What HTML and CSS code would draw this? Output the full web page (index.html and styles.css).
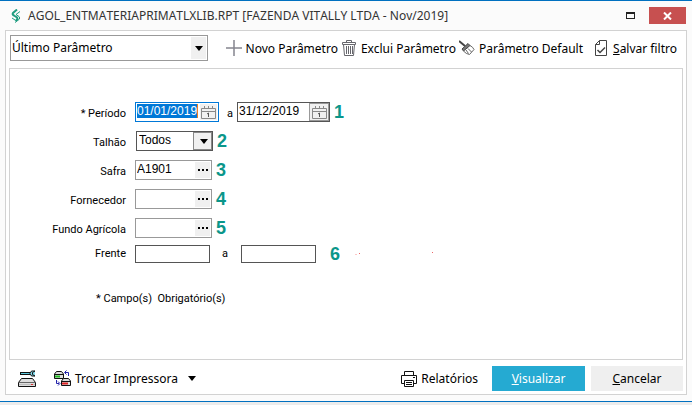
FILE: index.html
```html
<!DOCTYPE html>
<html lang="pt-BR">
<head>
    <meta charset="UTF-8">
    <meta name="viewport" content="width=device-width, initial-scale=1.0">
    <title>AGOL_ENTMATERIAPRIMATLXLIB.RPT</title>
    <link rel="stylesheet" href="styles.css">
</head>
<body>
    <div class="window">
        <div class="titlebar">
            <svg class="logo" width="10" height="14" viewBox="0 0 10 14" fill="none" stroke="#1f9d80" stroke-width="2">
                <path d="M6 0.500L2 4Q1 5.500 3 6.500L6 8.500Q7 10 5.500 11L4.500 12"/>
                <path d="M9 2.500L5 5.500L8 7.500Q9.500 9 8 10.500L4 13.500M1 9L4 11" stroke-width="1"/>
            </svg>
            <span class="title">AGOL_ENTMATERIAPRIMATLXLIB.RPT [FAZENDA VITALLY LTDA - Nov/2019]</span>
            <button type="button" class="max" aria-label="Maximizar"></button>
            <button type="button" class="close" aria-label="Fechar">
                <svg width="9" height="8" viewBox="0 0 9 8" stroke="#fff" stroke-width="2"><path d="M1 0.500L8 7.500M8 0.500L1 7.500"/></svg>
            </button>
        </div>
        <div class="frame">
            <div class="toolbar">
                <div class="combo preset">
                    <select aria-label="Parâmetro">
                        <option>Último Parâmetro</option>
                    </select>
                </div>
                <div class="tools">
                    <button type="button" class="tool">
                        <svg width="16" height="16" viewBox="0 0 16 16" stroke="#85858f" stroke-width="1.500"><path d="M8 0V16M0 8H16"/></svg>
                        Novo Parâmetro
                    </button>
                    <button type="button" class="tool">
                        <svg width="16" height="16" viewBox="0 0 16 16" fill="none" stroke="#66666c"><path d="M1.500 2.500H14.500V4.500H1.500ZM5.500 2.500V0.500H10.500V2.500M2.500 4.500L3.500 15.500H12.500L13.500 4.500M5.500 6V14M7.500 6V14M9.500 6V14M11.500 6V14"/></svg>
                        Exclui Parâmetro
                    </button>
                    <button type="button" class="tool">
                        <svg width="16" height="16" viewBox="0 0 16 16" fill="none" stroke="#444"><path d="M0 1L6 6" stroke-width="2"/><path d="M3 9L9 3.500L11 5.500L4.500 11Z" fill="#777"/><path d="M4.500 11Q7 14 10.500 14.500L15 9.500Q14 7 11 5.500M7 10L9.500 13.500M9 8.500L12.500 12" stroke="#666"/></svg>
                        Parâmetro Default
                    </button>
                    <button type="button" class="tool save">
                        <svg width="16" height="16" viewBox="0 0 16 16" fill="none" stroke="#444"><path d="M6.500 0.500H13.500V15.500H2.500V4.500ZM6.500 0.500V4.500H2.500"/><path d="M4.500 10L7 12.500L12 7.500" stroke-width="1.500"/></svg>
                        <span><u>S</u>alvar filtro</span>
                    </button>
                </div>
            </div>

            <form class="panel">
                <div class="row">
                    <label for="inicio">* Período</label>
                    <div class="field focus">
                        <input type="text" id="inicio" class="date selected" value="01/01/2019">
                        <button type="button" class="pick" aria-label="Calendário">
                            <svg width="15" height="13" viewBox="0 0 15 13" fill="none" stroke="#888"><path d="M0.500 2.500H14.500V12.500H0.500ZM0.500 5.500H14.500M3.500 0V3M7.500 0V3M11.500 0V3"/><path d="M6 8L7.500 7V11" stroke="#555"/></svg>
                        </button>
                    </div>
                    <label for="fim" class="sep">a</label>
                    <div class="field dark until">
                        <input type="text" id="fim" class="date" value="31/12/2019">
                        <button type="button" class="pick boxed" aria-label="Calendário">
                            <svg width="15" height="13" viewBox="0 0 15 13" fill="none" stroke="#888"><path d="M0.500 2.500H14.500V12.500H0.500ZM0.500 5.500H14.500M3.500 0V3M7.500 0V3M11.500 0V3"/><path d="M6 8L7.500 7V11" stroke="#555"/></svg>
                        </button>
                    </div>
                    <span class="num">1</span>
                </div>
                <div class="row">
                    <label for="talhao">Talhão</label>
                    <div class="combo small">
                        <select id="talhao">
                            <option>Todos</option>
                        </select>
                    </div>
                    <span class="num">2</span>
                </div>
                <div class="row">
                    <label for="safra">Safra</label>
                    <div class="field lookup">
                        <input type="text" id="safra" value="A1901">
                        <button type="button" class="dots" aria-label="Procurar safra"><i></i><i></i><i></i></button>
                    </div>
                    <span class="num">3</span>
                </div>
                <div class="row">
                    <label for="fornecedor">Fornecedor</label>
                    <div class="field lookup">
                        <input type="text" id="fornecedor">
                        <button type="button" class="dots" aria-label="Procurar fornecedor"><i></i><i></i><i></i></button>
                    </div>
                    <span class="num">4</span>
                </div>
                <div class="row">
                    <label for="fundo">Fundo Agrícola</label>
                    <div class="field lookup">
                        <input type="text" id="fundo">
                        <button type="button" class="dots" aria-label="Procurar fundo agrícola"><i></i><i></i><i></i></button>
                    </div>
                    <span class="num">5</span>
                </div>
                <div class="row front">
                    <label for="frente1">Frente</label>
                    <input type="text" id="frente1" class="plain">
                    <label for="frente2" class="to">a</label>
                    <input type="text" id="frente2" class="plain">
                    <span class="num">6</span>
                    <svg width="80" height="6" viewBox="0 0 80 6" aria-hidden="true"><path d="M1 3.500H3" stroke="#fbc8c8"/><path d="M5 2.500H6M78 1.500H79" stroke="#e66"/></svg>
                </div>
                <p class="note">* Campo(s)&nbsp; Obrigatório(s)</p>
            </form>

            <div class="footer">
                <button type="button" class="tool" aria-label="Configurar impressora">
                    <svg width="18" height="18" viewBox="0 0 18 18" fill="none" stroke="#111"><path d="M2 3.500H12" stroke-width="3"/><path d="M3 3.500H12" stroke="#5cc8dc"/><path d="M17 1H13.500L12 3.500L13.500 6H17M17 1L14.500 2.500V4.500L17 6" fill="#8de"/><path d="M3.500 8.500H14.500L17.500 12.500V16.500H0.500V12.500Z" fill="#ddd"/><path d="M1 12.500H17" stroke="#666"/><path d="M1 14.500H17" stroke="#bbb"/><path d="M13 14.500H15" stroke="#d33"/></svg>
                </button>
                <button type="button" class="tool change">
                    <svg width="17" height="17" viewBox="0 0 17 17" fill="none" stroke="#111"><path d="M2.500 1.500H7.500L9.500 4V8.500H0.500V4Z" fill="#ddd"/><path d="M1 4.500H9"/><path d="M1 6.500H6" stroke="#2b2" stroke-width="2"/><path d="M9.500 8.500H14.500L16.500 11V15.500H7.500V11Z" fill="#ddd"/><path d="M8 11.500H16"/><path d="M8 13.500H14" stroke="#d22" stroke-width="2"/><path d="M14.500 6V2.500H11M12.500 0.500L10.500 2.500L12.500 4.500M2.500 10V13.500H5M4 11.500L6 13.500L4 15.500" stroke="#22a"/></svg>
                    Trocar Impressora
                    <span class="arrow"></span>
                </button>
                <button type="button" class="tool reports">
                    <svg width="16" height="16" viewBox="0 0 16 16" fill="none" stroke="#111"><path d="M3.500 4.500V0.500H12.500V4.500M3.500 12.500H0.500V4.500H15.500V12.500H12.500M3.500 9.500H12.500V15.500H3.500ZM5 11.500H11M5 13.500H11M12 6.500H14"/></svg>
                    Relatórios
                </button>
                <button type="button" class="btn primary"><u>V</u>isualizar</button>
                <button type="button" class="btn"><u>C</u>ancelar</button>
            </div>
        </div>
    </div>
</body>
</html>
```
FILE: styles.css
```css
* {
    box-sizing: border-box;
}
body {
    margin: 0;
    background: #ececec;
    color: #000;
    font: 12px "Noto Sans", "Open Sans", sans-serif;
}
.window {
    background: #fbfbfb;
    border-top: 1px solid #0070c0;
    border-bottom: 1px solid #0070c0;
    padding: 0 5px 6px;
}
button, input, select {
    font: inherit;
    color: inherit;
    margin: 0;
    padding: 0;
    border: 0;
    background: none;
}
svg {
    display: block;
    flex: none;
}
.titlebar {
    display: flex;
    align-items: center;
    height: 29px;
    padding-left: 6px;
}
.title {
    flex: 1;
    margin-left: 7px;
    color: #333;
    font-kerning: none;
    white-space: nowrap;
}
.max {
    width: 9px;
    height: 7px;
    margin-right: 14px;
    border: 1px solid #222;
    border-top-width: 2px;
}
.close {
    display: flex;
    align-items: center;
    justify-content: center;
    width: 37px;
    height: 17px;
    margin-right: 1px;
    background: #c75050;
}
.frame {
    border: 1px solid #d2d2d2;
    background: #fff;
    padding: 4px 3px 3px;
}
.toolbar {
    display: flex;
    align-items: center;
    justify-content: space-between;
    height: 26px;
    margin-bottom: 7px;
    padding-right: 6px;
}
.tools {
    display: flex;
    gap: 3px;
}
.tool {
    display: flex;
    align-items: center;
    gap: 4px;
    white-space: nowrap;
}
.save {
    margin-left: 7px;
}

/* drop-downs */
.combo {
    position: relative;
    border: 1px solid #999;
    background: #fff;
}
.combo select {
    display: block;
    width: 100%;
    height: 100%;
    appearance: none;
}
.combo::before {
    content: "";
    position: absolute;
    top: 1px;
    right: 1px;
    bottom: 1px;
    width: 15px;
    background: #f0f0f0;
    pointer-events: none;
}
.combo::after, .arrow {
    content: "";
    border: 4px solid transparent;
    border-top: 5px solid #000;
    border-bottom: 0;
}
.combo::after {
    position: absolute;
    top: 50%;
    right: 4px;
    margin-top: -2px;
    pointer-events: none;
}
.preset {
    width: 198px;
    height: 26px;
    margin-left: 1px;
}
.preset select {
    padding: 0 18px 2px 1px;
}
.small {
    width: 77px;
    height: 20px;
    margin-left: 1px;
    border-color: #555;
}
.small select {
    padding: 0 18px 2px 2px;
}
.small::before {
    top: 0;
    right: 0;
    bottom: 0;
    width: 17px;
    border: 1px solid #888;
}

/* parameters */
.panel {
    border: 1px solid #d2d2d2;
    padding: 33px 0 53px;
    font: 12px "Liberation Sans", Arial, sans-serif;
}
.row {
    display: flex;
    align-items: center;
    height: 20px;
    margin-bottom: 9px;
}
.row label, .note {
    font: 11px/14px Roboto, sans-serif;
}
.row label {
    width: 116px;
    margin-right: 9px;
    padding-top: 4px;
    text-align: right;
}
.row .sep {
    width: 14px;
    margin-right: 4px;
}
.row .to {
    width: 18px;
    margin-right: 13px;
}
.field {
    display: flex;
    align-items: center;
    height: 20px;
    border: 1px solid #999;
    background: #fff;
}
.field input {
    flex: 1;
    min-width: 0;
    height: 14px;
    margin-bottom: 2px;
    padding-left: 1px;
}
.focus {
    width: 84px;
    border-color: #0078d7;
}
.focus .selected {
    flex: none;
    width: 61px;
    margin: 0 2px 2px 1px;
    padding: 0;
    background: #0078d7;
    border-right: 1px solid #f08020;
    color: #fff;
}
.dark {
    border-color: #555;
}
.until {
    width: 93px;
}
.pick {
    display: flex;
    align-items: center;
    justify-content: center;
    width: 17px;
    height: 16px;
    background: #f0f0f0;
}
.boxed {
    width: 20px;
    height: 18px;
    border: 1px solid #999;
}
.lookup {
    width: 77px;
    padding-right: 1px;
}
.dots {
    display: flex;
    align-items: center;
    justify-content: center;
    gap: 2px;
    width: 15px;
    height: 16px;
    background: #f0f0f0;
}
.dots i {
    width: 2px;
    height: 2px;
    background: #000;
}
.plain {
    width: 75px;
    height: 18px;
    border: 1px solid #555;
    background: #fff;
}
.num {
    margin-left: 4px;
    color: #0b968a;
    font: bold 18px/20px "Liberation Sans", Arial, sans-serif;
}
.front {
    height: 18px;
    margin-top: -2px;
}
.front label {
    padding: 0;
}
.front .num {
    margin: 0 14px;
}
.note {
    margin: 29px 0 0 86px;
}

/* bottom bar */
.footer {
    display: flex;
    align-items: center;
    margin-top: 6px;
    padding-left: 9px;
}
.change {
    margin-left: 18px;
}
.arrow {
    margin-left: 6px;
}
.reports {
    margin-left: auto;
    margin-right: 14px;
}
.btn {
    width: 92px;
    height: 25px;
    background: #efefef;
}
.primary {
    width: 93px;
    margin-right: 6px;
    background: #25aad2;
    color: #fff;
}
```
